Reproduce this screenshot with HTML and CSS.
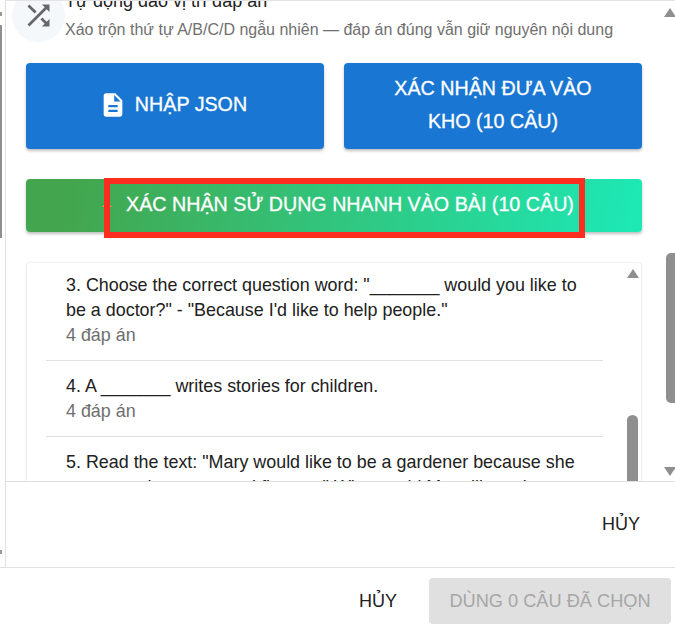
FILE: index.html
```html
<!DOCTYPE html>
<html lang="vi">
<head>
<meta charset="utf-8">
<title>Nhập câu hỏi</title>
<link rel="stylesheet" href="styles.css">
</head>
<body>
<div class="app">
  <div class="panel">
    <div class="gutter">
      <span class="arrow-up tiny"></span>
      <span class="gutter-thumb"></span>
      <span class="arrow-down tiny"></span>
    </div>
    <div class="dialog">
      <div class="scroll">
        <div class="body">
          <div class="shuffle-row">
            <span class="shuffle-icon">
              <svg viewBox="0 0 24 24" width="33" height="33"><path d="M10.59 9.17L5.41 4 4 5.41l5.17 5.17 1.42-1.41zM14.5 4l2.04 2.04L4 18.59 5.41 20 17.96 7.46 20 9.5V4h-5.5zm.33 9.41l-1.41 1.41 3.13 3.13L14.5 20H20v-5.5l-2.04 2.04-3.13-3.13z"/></svg>
            </span>
            <div class="shuffle-text">
              <div class="shuffle-title">Tự động đảo vị trí đáp án</div>
              <div class="shuffle-sub">Xáo trộn thứ tự A/B/C/D ngẫu nhiên — đáp án đúng vẫn giữ nguyên nội dung</div>
            </div>
          </div>
          <div class="btn-grid">
            <button class="btn primary">
              <svg class="start-icon" viewBox="0 0 24 24" width="28" height="28"><path d="M14 2H6c-1.1 0-2 .9-2 2v16c0 1.1.9 2 2 2h12c1.1 0 2-.9 2-2V8l-6-6zm2 16H8v-2h8v2zm0-4H8v-2h8v2zm-3-5V3.5L18.5 9H13z"/></svg>
              <span class="btn-label">NHẬP JSON</span>
            </button>
            <button class="btn primary">XÁC NHẬN ĐƯA VÀO KHO (10 CÂU)</button>
          </div>
          <div class="quick-wrap">
            <button class="btn quick">
              <svg class="start-icon quick-icon" viewBox="0 0 28 28" width="28" height="28"><path d="M12 16L15 13H19L22 16z"/></svg>
              <span>XÁC NHẬN SỬ DỤNG NHANH VÀO BÀI (10 CÂU)</span>
            </button>
            <div class="highlight"></div>
          </div>
          <div class="list-card">
            <div class="list">
              <div class="item">
                <div class="q">3. Choose the correct question word: "_______ would you like to be a doctor?" - "Because I'd like to help people."</div>
                <div class="a">4 đáp án</div>
              </div>
              <div class="item">
                <div class="q">4. A _______ writes stories for children.</div>
                <div class="a">4 đáp án</div>
              </div>
              <div class="item">
                <div class="q">5. Read the text: "Mary would like to be a gardener because she wants to plant trees and flowers." Why would Mary like to be a gardener?</div>
                <div class="a">4 đáp án</div>
              </div>
            </div>
            <div class="inner-bar">
              <span class="arrow-up"></span>
              <span class="inner-thumb"></span>
            </div>
          </div>
        </div>
        <div class="outer-bar">
          <span class="arrow-up"></span>
          <span class="outer-thumb"></span>
          <span class="arrow-down"></span>
        </div>
      </div>
      <div class="dialog-actions">
        <button class="text-btn">HỦY</button>
      </div>
    </div>
  </div>
  <div class="footer">
    <button class="text-btn">HỦY</button>
    <button class="btn-disabled" disabled>DÙNG 0 CÂU ĐÃ CHỌN</button>
  </div>
</div>
</body>
</html>
```

FILE: styles.css
```css
* { box-sizing: border-box; }
html, body { margin: 0; height: 100%; overflow: hidden; background: #fff; }
body { font-family: "Liberation Sans", Arial, sans-serif; color: #212121; }
button { font-family: inherit; border: 0; cursor: pointer; }

.app { height: 628px; display: flex; flex-direction: column; }

.panel { height: 568px; flex: none; display: flex; border-bottom: 1px solid #e0e0e0; }

.gutter { width: 5px; flex: none; display: flex; flex-direction: column; }
.gutter-thumb { display: block; width: 2px; height: 213px; margin-top: 9px; background: #8f8f8f; }
.arrow-up.tiny, .arrow-down.tiny { border-width: 0; width: 2px; height: 4px; background: #999; display: block; }
.arrow-up.tiny { margin-top: 12px; }
.arrow-down.tiny { margin-top: 312px; }

.dialog { flex: 1; min-width: 0; display: flex; flex-direction: column; border-left: 1px solid #e0e0e0; border-top: 1px solid #e3e3e3; }

.scroll { height: 481px; flex: none; display: flex; overflow: hidden; border-bottom: 1px solid #e0e0e0; }
.body { flex: 1; min-width: 0; padding: 0 23px 0 20px; }

.shuffle-row { display: flex; margin: -12px 0 0 -14px; height: 53px; }
.shuffle-icon { width: 53px; height: 53px; flex: none; border-radius: 50%; background: #f4f8fb; display: flex; align-items: center; justify-content: center; }
.shuffle-icon svg { fill: #666; }
.shuffle-text { white-space: nowrap; }
.shuffle-title { font-size: 18px; line-height: 24px; color: #212121; }
.shuffle-sub { font-size: 16px; line-height: 20px; color: #6f6f6f; margin-top: 7px; }

.btn-grid { display: grid; grid-template-columns: 298px 298px; gap: 20px; margin-top: 21px; }

.btn { border-radius: 4px; color: #fff; font-size: 19.7px; font-weight: 400; line-height: 33px; -webkit-text-stroke: .3px #fff; box-shadow: 0 2px 3px rgba(0,0,0,.25); padding: 0 0 2px; }
.primary { height: 86px; background: #1976d2; padding: 0 30px 2px; display: flex; align-items: center; justify-content: center; gap: 8px; text-align: center; }
.primary svg { fill: #fff; flex: none; }
.btn-label { margin-bottom: 2px; }
.start-icon { margin-left: -4px; }

.quick-wrap { position: relative; margin-top: 30px; }
.quick { width: 616px; height: 53px; display: flex; align-items: center; justify-content: center; gap: 8px; background: linear-gradient(100deg, #43a64e 0%, #43a64e 8%, #1de9b6 100%); }
.quick-icon { fill: #ff8c42; flex: none; }
.highlight { position: absolute; left: 78px; top: -1px; width: 481px; height: 60px; border: 6px solid #ff2d20; pointer-events: none; }

.list-card { height: 240px; margin-top: 30px; display: flex; overflow: hidden; border-radius: 4px 4px 0 0; border: 1px solid #f0f0f0; border-bottom: 0; box-shadow: 0 1px 2px rgba(0,0,0,.08); }
.list { flex: 1; min-width: 0; padding: 10px 0 0 19px; }
.item { width: 557px; padding: 0 20px 12px 20px; border-bottom: 1px solid #e0e0e0; margin-bottom: 13px; }
.q { font-size: 17.9px; line-height: 25px; color: #212121; }
.a { font-size: 17.9px; line-height: 25px; color: #6e6e6e; }

.inner-bar { width: 15px; flex: none; padding: 6px 3px 0 1px; display: flex; flex-direction: column; align-items: center; }
.inner-thumb { display: block; width: 11px; flex: none; height: 80px; margin-top: 137px; border-radius: 6px 6px 0 0; background: #8f8f8f; }

.outer-bar { width: 10px; flex: none; display: flex; flex-direction: column; align-items: center; }
.outer-bar .arrow-up { margin-top: 7px; }
.outer-thumb { display: block; width: 9px; height: 150px; margin: 236px 0 0 1px; border-radius: 5px 0 0 5px; background: #8f8f8f; }
.outer-bar .arrow-down { margin-top: 64px; }

.arrow-up { display: block; width: 0; height: 0; border-left: 6px solid transparent; border-right: 6px solid transparent; border-bottom: 9px solid #8f8f8f; }
.arrow-down { display: block; width: 0; height: 0; border-left: 6px solid transparent; border-right: 6px solid transparent; border-top: 9px solid #8f8f8f; }

.dialog-actions { flex: 1; display: flex; justify-content: flex-end; align-items: center; padding-right: 35px; }
.text-btn { background: transparent; font-size: 18px; color: #212121; padding: 0; }

.footer { flex: 1; display: flex; justify-content: flex-end; align-items: center; gap: 32px; padding: 6px 4px 0 0; }
.btn-disabled { width: 242px; height: 46px; border-radius: 4px; background: #e0e0e0; color: #a6a6a6; font-size: 18.2px; padding: 0; }
```
